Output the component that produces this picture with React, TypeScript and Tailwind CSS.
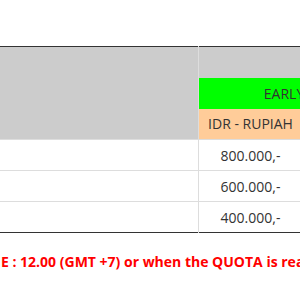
import React from "react";

export default function App() {
  const rows = ["800.000,-", "600.000,-", "400.000,-"];
  return (
    <div
      className="w-[300px] h-[289px] overflow-hidden bg-white text-[#333] text-[14px]"
      style={{ fontFamily: '"Open Sans", sans-serif' }}
    >
      <div className="w-[600px] pt-[46px]">
        <table className="border-collapse table-fixed w-[404px]">
          <colgroup>
            <col className="w-[198px]" />
            <col className="w-[102px]" />
            <col className="w-[102px]" />
          </colgroup>
          <thead>
            <tr className="border-t border-[#333]">
              <th rowSpan={3} className="bg-[#cccccc] border-r border-[#dddddd] p-0"></th>
              <th colSpan={2} className="bg-[#cccccc] h-[31px] p-0"></th>
            </tr>
            <tr>
              <th colSpan={2} className="bg-[#00ff00] h-[31px] p-0 font-normal text-center">
                EARLY BIRD
              </th>
            </tr>
            <tr>
              <th className="bg-[#ffcc99] h-[31px] p-0 font-normal text-center">IDR - RUPIAH</th>
              <th className="bg-[#ffcc99] h-[31px] p-0 font-normal text-center">USD - DOLLAR</th>
            </tr>
          </thead>
          <tbody>
            {rows.map((v, i) => (
              <tr
                key={v}
                className={
                  "border-t border-[#dddddd]" + (i === rows.length - 1 ? " border-b border-b-[#333]" : "")
                }
              >
                <td className="border-r border-[#dddddd] h-[31px] p-0"></td>
                <td className="h-[31px] p-0 text-center">{v}</td>
                <td className="h-[31px] p-0 text-center"></td>
              </tr>
            ))}
          </tbody>
        </table>
        <p className="mt-[19px] pl-[1px] font-bold text-[#ff0000] whitespace-nowrap leading-[20px]">
          E : 12.00 (GMT +7) or when the QUOTA is reached
        </p>
      </div>
    </div>
  );
}
